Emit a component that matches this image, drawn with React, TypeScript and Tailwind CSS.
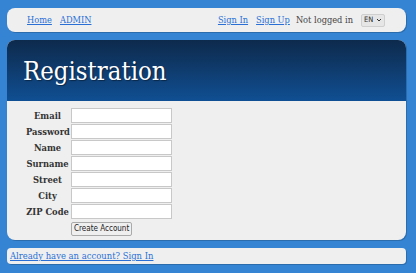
import React from "react";

const serif = { fontFamily: '"DejaVu Serif", serif', fontStretch: "condensed" } as React.CSSProperties;

const fields = ["Email", "Password", "Name", "Surname", "Street", "City", "ZIP Code"];

export default function App() {
  return (
    <div className="w-[416px] h-[273px] bg-[#3584d4] pt-[8px] pl-[7px] pr-[10px] flex flex-col gap-[8px] overflow-hidden" style={serif}>
      {/* nav */}
      <div className="h-[24px] bg-[#efefef] rounded-[8px] shadow-[1px_1px_0_rgba(0,0,0,0.18)] flex items-center pl-[20px] pr-[21px] text-[9.2px]">
        <a href="#" className="text-[#2a6fd6] underline">Home</a>
        <a href="#" className="text-[#2a6fd6] underline ml-[8px]">ADMIN</a>
        <div className="flex-1" />
        <a href="#" className="text-[#2a6fd6] underline">Sign In</a>
        <a href="#" className="text-[#2a6fd6] underline ml-[8px]">Sign Up</a>
        <span className="text-[#444] ml-[6px]">Not logged in</span>
        <div
          className="ml-[8px] h-[13px] w-[24px] bg-[#e6e6e6] border border-[#cfcfcf] rounded-[2px] flex items-center justify-between px-[2px] text-[7.5px] text-[#333]"
          style={{ fontFamily: '"DejaVu Sans", sans-serif' }}
        >
          <span>EN</span>
          <svg width="6" height="4" viewBox="0 0 6 4">
            <path d="M1 1 L3 3 L5 1" fill="none" stroke="#333" strokeWidth="1" />
          </svg>
        </div>
      </div>

      {/* main */}
      <div className="h-[200px] bg-[#efefef] rounded-[8px] shadow-[1px_1px_0_rgba(0,0,0,0.18)] overflow-hidden flex flex-col">
        <div className="h-[61px] bg-gradient-to-b from-[#0d2a4c] to-[#0f4f93] flex items-center pl-[16px] pt-[2px]">
          <h1 className="text-white text-[25.5px] leading-none" style={{ textShadow: "1px 1px 1px rgba(0,0,0,0.4)" }}>Registration</h1>
        </div>
        <div className="pt-[7px] pl-[19px] flex flex-col gap-[1px]">
          {fields.map((f) => (
            <div key={f} className="flex items-center h-[15px]">
              <label className="w-[45px] pr-[2px] text-center text-[9.3px] font-bold text-[#333]">{f}</label>
              <input className="w-[101px] h-[15px] bg-white border border-[#c8c8c8] outline-none" />
            </div>
          ))}
          <div className="flex h-[15px] items-center mt-[1px]">
            <div className="w-[45px]" />
            <button
              className="h-[14px] px-[2px] bg-[#efefef] border border-[#aaa] rounded-[2px] text-[8px] text-[#222] leading-none"
              style={{ fontFamily: '"DejaVu Sans", sans-serif' }}
            >
              Create Account
            </button>
          </div>
        </div>
      </div>

      {/* bottom */}
      <div className="h-[16px] bg-[#efefef] rounded-[4px] shadow-[1px_1px_0_rgba(0,0,0,0.18)] flex items-center pl-[3px] text-[9.4px]">
        <a href="#" className="text-[#2a6fd6] underline">Already have an account? Sign In</a>
      </div>
    </div>
  );
}
